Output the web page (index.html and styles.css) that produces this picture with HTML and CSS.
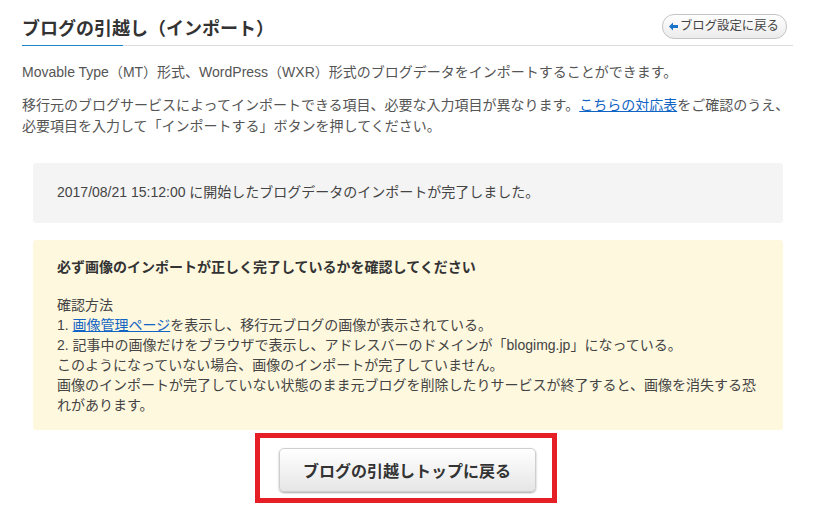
FILE: index.html
```html
<!DOCTYPE html>
<html lang="ja">
<head>
<meta charset="utf-8">
<link rel="stylesheet" href="styles.css">
</head>
<body>
<div class="page">
  <div class="header">
    <h1 class="title">ブログの引越し（インポート）</h1>
    <a class="back-btn" href="#"><svg class="back-icon" width="9" height="9" viewBox="0 0 9 9"><polygon points="0,4.5 4,0.5 4,3 9,3 9,6 4,6 4,8.5" fill="#1a73c8"/></svg>ブログ設定に戻る</a>
  </div>
  <p class="lead">Movable Type（MT）形式、WordPress（WXR）形式のブログデータをインポートすることができます。</p>
  <p class="lead lead2">移行元のブログサービスによってインポートできる項目、必要な入力項目が異なります。<a href="#" class="link">こちらの対応表</a>をご確認のうえ、<br>必要項目を入力して「インポートする」ボタンを押してください。</p>
  <div class="notice">2017/08/21 15:12:00 に開始したブログデータのインポートが完了しました。</div>
  <div class="warning">
    <p class="warning-title">必ず画像のインポートが正しく完了しているかを確認してください</p>
    <p class="warning-body">確認方法<br>1. <a href="#" class="link">画像管理ページ</a>を表示し、移行元ブログの画像が表示されている。<br>2. 記事中の画像だけをブラウザで表示し、アドレスバーのドメインが「blogimg.jp」になっている。<br>このようになっていない場合、画像のインポートが完了していません。<br>画像のインポートが完了していない状態のまま元ブログを削除したりサービスが終了すると、画像を消失する恐れがあります。</p>
  </div>
  <div class="action">
    <div class="highlight">
      <a class="top-btn" href="#">ブログの引越しトップに戻る</a>
    </div>
  </div>
</div>
</body>
</html>
```
FILE: styles.css
```css
html, body {
  margin: 0;
  padding: 0;
  background: #fff;
}
body {
  font-family: "Liberation Sans", "Noto Sans CJK JP", sans-serif;
  color: #555;
  font-size: 14px;
}
.page {
  width: 771px;
  padding-left: 22px;
}
.header {
  position: relative;
  display: flex;
  justify-content: space-between;
  align-items: flex-end;
  padding-top: 14px;
  border-bottom: 1px solid #dcdcdc;
}
.title {
  position: relative;
  margin: 0;
  font-size: 18px;
  line-height: 26px;
  font-weight: bold;
  color: #333;
  padding-bottom: 3px;
}
.title::after {
  content: "";
  position: absolute;
  left: 0;
  bottom: -1px;
  width: 101px;
  height: 1px;
  background: #1d86c8;
}
.back-btn {
  display: flex;
  align-items: center;
  gap: 2px;
  height: 23px;
  padding: 0 7px 0 6px;
  margin: 0 6px 6px 0;
  border: 1px solid #c4c4c4;
  border-radius: 12px;
  background: linear-gradient(#ffffff, #ebebeb);
  color: #444;
  font-size: 12.4px;
  text-decoration: none;
  line-height: 23px;
}
.back-icon {
  display: block;
}
.lead {
  margin: 16px 0 0;
  line-height: 21px;
}
.lead2 {
  margin-top: 12px;
}
.link {
  color: #1064c4;
  text-decoration: underline;
}
.notice {
  margin: 26px 10px 0 11px;
  padding: 19px 24px 20px;
  background: #f4f4f4;
  border-radius: 3px;
  line-height: 21px;
  color: #444;
}
.warning {
  margin: 17px 10px 0 11px;
  padding: 17px 24px 15px;
  background: #fef8df;
  border-radius: 3px;
  line-height: 20px;
  color: #444;
}
.warning-title {
  margin: 0 0 18px;
  font-weight: bold;
  color: #333;
}
.warning-body {
  margin: 0;
}
.action {
  display: flex;
  justify-content: center;
  margin-top: 3px;
}
.highlight {
  box-sizing: border-box;
  width: 302px;
  height: 70px;
  border: 5px solid #e61f26;
  padding: 10px 16px 0 19px;
  margin-left: -4px;
}
.top-btn {
  display: flex;
  align-items: center;
  justify-content: center;
  box-sizing: border-box;
  width: 257px;
  height: 44px;
  border: 1px solid #cfcfcf;
  border-radius: 5px;
  background: linear-gradient(#ffffff, #e6e6e6);
  box-shadow: 0 1px 2px rgba(0,0,0,0.35);
  color: #333;
  font-size: 16px;
  font-weight: bold;
  text-decoration: none;
}
```
